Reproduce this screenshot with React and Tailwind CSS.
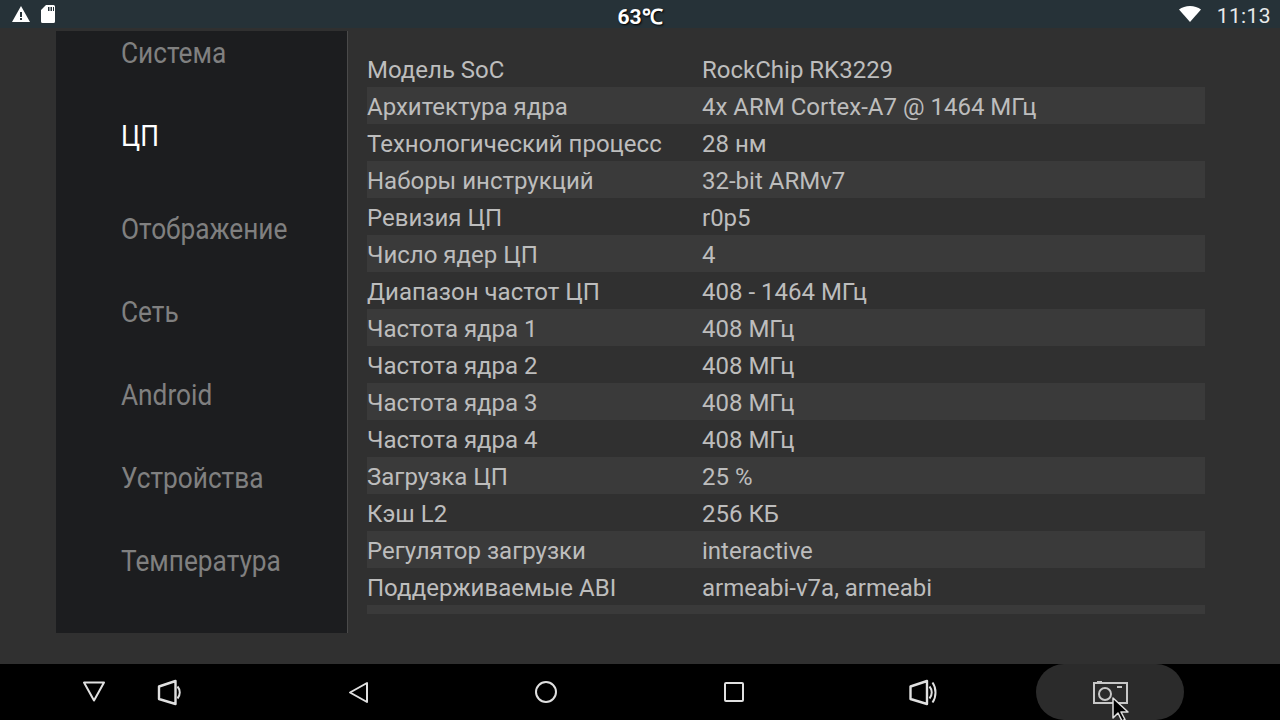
const tabs = ['Система', 'ЦП', 'Отображение', 'Сеть', 'Android', 'Устройства', 'Температура', 'Питание'];

const rows = [
  ['Модель SoC', 'RockChip RK3229'],
  ['Архитектура ядра', '4x ARM Cortex-A7 @ 1464 МГц'],
  ['Технологический процесс', '28 нм'],
  ['Наборы инструкций', '32-bit ARMv7'],
  ['Ревизия ЦП', 'r0p5'],
  ['Число ядер ЦП', '4'],
  ['Диапазон частот ЦП', '408 - 1464 МГц'],
  ['Частота ядра 1', '408 МГц'],
  ['Частота ядра 2', '408 МГц'],
  ['Частота ядра 3', '408 МГц'],
  ['Частота ядра 4', '408 МГц'],
  ['Загрузка ЦП', '25 %'],
  ['Кэш L2', '256 КБ'],
  ['Регулятор загрузки', 'interactive'],
  ['Поддерживаемые ABI', 'armeabi-v7a, armeabi'],
];

const StatusBar = () => (
  <div className="grid h-[28px] shrink-0 grid-cols-3 items-center bg-[#263238] text-white">
    <div className="flex items-center gap-[11px] pl-[12px]">
      <svg width="18" height="16" viewBox="0 0 18 16">
        <path fill="#fff" fillRule="evenodd" d="M0 16 9 0l9 16ZM8 6v5h2V6Zm0 6v2h2v-2Z" />
      </svg>
      <svg width="14" height="18" viewBox="0 0 14 18">
        <path fill="#fff" fillRule="evenodd" d="M5 0h7.500A1.500 1.500 0 0 1 14 1.500v15a1.500 1.500 0 0 1-1.500 1.500h-11A1.500 1.500 0 0 1 0 16.500V5ZM7 2v4h1.500V2Zm2.500 0v4H11V2ZM12 2v4h1V2Z" />
      </svg>
    </div>
    <div className="pt-[7px] text-center font-['Roboto',sans-serif] text-[21px] font-bold leading-none [text-shadow:1px_1px_2px_#000]">63℃</div>
    <div className="flex items-center justify-end gap-[16px] pr-[9px]">
      <svg width="22" height="16" viewBox="0 0 22 16">
        <path fill="#fff" d="M11 16 0 3.500C3 1.200 6.800 0 11 0s8 1.200 11 3.500Z" />
      </svg>
      <span className="pt-[5px] font-['Roboto',sans-serif] text-[21px] leading-none tracking-[0.4px] text-[#e8eaeb]">11:13</span>
    </div>
  </div>
);

const Sidebar = () => (
  <div className="mt-[3px] h-[602px] w-[292px] shrink-0 overflow-hidden border-r border-[#4a4a4a] bg-[#1c1d1f] pl-[65px]">
    <div className="-mt-[20.5px]">
      {tabs.map((tab) => (
        <div
          key={tab}
          className={`flex h-[83px] items-center font-['Roboto',sans-serif] text-[30px] ${
            tab === 'ЦП' ? 'mb-[10px] text-white' : 'text-[#808080]'
          }`}
        >
          <span className="inline-block origin-left scale-x-[0.875] whitespace-nowrap">{tab}</span>
        </div>
      ))}
    </div>
  </div>
);

const InfoTable = () => (
  <div className="ml-[19px] mt-[22px] w-[838px] font-['Roboto',sans-serif] text-[24px] text-[#bdbdbd]">
    {rows.map(([label, value], i) => (
      <div key={label} className={`flex h-[37px] items-center pt-[2px] ${i % 2 === 1 ? 'bg-[#3a3a3a]' : ''}`}>
        <span className="w-[335px] shrink-0 whitespace-nowrap">{label}</span>
        <span className="whitespace-nowrap">{value}</span>
      </div>
    ))}
    <div className="h-[9px] bg-[#3a3a3a]" />
  </div>
);

const NavIcon = ({ className, children }) => (
  <svg className={className} width="32" height="32" viewBox="0 0 32 32" fill="none" stroke="#e0e0e0" strokeWidth="2" strokeLinejoin="round">
    {children}
  </svg>
);

const NavBar = () => (
  <div className="flex h-[56px] shrink-0 items-center bg-black">
    <NavIcon className="ml-[78px]">
      <path d="M6 6.500h20L16 24.500Z" />
    </NavIcon>
    <NavIcon className="ml-[43px]">
      <path d="M6 10.500 22.500 5v23L6 23Z" strokeWidth="2.400" />
      <path d="M24.500 10.500c3 3.500 3 8.500 0 12" />
    </NavIcon>
    <NavIcon className="ml-[157px]">
      <path d="M25 7v19L8 16.500Z" />
    </NavIcon>
    <NavIcon className="ml-[156px]">
      <circle cx="16" cy="16" r="10" />
    </NavIcon>
    <NavIcon className="ml-[156px]">
      <rect x="7" y="7" width="18" height="18" rx="1" />
    </NavIcon>
    <NavIcon className="ml-[157px]">
      <path d="M3.500 10.500 20 5v23L3.500 23Z" strokeWidth="2.400" />
      <path d="M22.500 10.500c3 3.500 3 8.500 0 12" />
      <path d="M25.500 6.500c4 5.500 4 14.500 0 20" />
    </NavIcon>
    <div className="relative ml-[97px] flex h-[56px] w-[148px] items-center justify-center rounded-[28px] bg-[#2b2b2b]">
      <svg width="36" height="28" viewBox="0 0 36 28" fill="none" stroke="#c8c8c8" strokeWidth="2">
        <path d="M2 5h33v20H2Z" />
        <path d="M5 4h5" />
        <circle cx="13" cy="16" r="6" />
        <path d="M25 9h5" />
      </svg>
      <svg className="absolute left-[75px] top-[33px]" width="22" height="24" viewBox="0 0 22 24">
        <path fill="#000" stroke="#e0e0e0" strokeWidth="1.500" strokeLinejoin="round" d="M2 1v20l5-5 4 8 3-1.500-4-7.500h7Z" />
      </svg>
    </div>
  </div>
);

export default function App() {
  return (
    <div className="flex h-[720px] w-[1280px] flex-col overflow-hidden bg-[#303030]">
      <StatusBar />
      <div className="flex min-h-0 flex-1 pl-[56px]">
        <Sidebar />
        <InfoTable />
      </div>
      <NavBar />
    </div>
  );
}
